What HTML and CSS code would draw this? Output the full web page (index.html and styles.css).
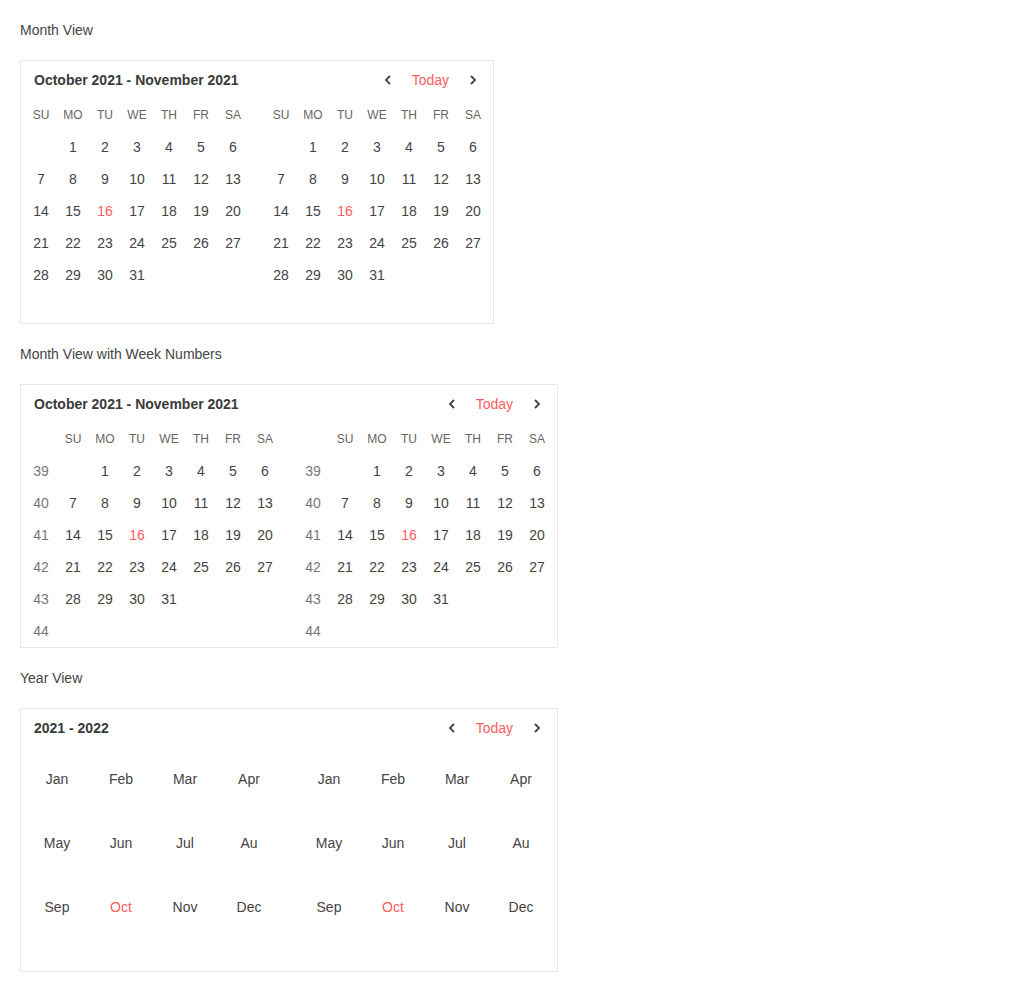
FILE: index.html
```html
<!DOCTYPE html>
<html lang="en">
<head>
    <meta charset="UTF-8">
    <meta name="viewport" content="width=device-width, initial-scale=1.0">
    <title>Calendar</title>
    <link rel="stylesheet" href="styles.css">
</head>
<body>
    <div class="label">Month View</div>
    <div class="calendar">
        <div class="cal-header">
            <span class="cal-title">October 2021 - November 2021</span>
            <div class="cal-nav">
                <svg class="chevron" viewBox="0 0 16 16"><polyline points="10,4 6,8 10,12"/></svg>
                <span class="today">Today</span>
                <svg class="chevron" viewBox="0 0 16 16"><polyline points="6,4 10,8 6,12"/></svg>
            </div>
        </div>
        <div class="cal-body" id="month-view"></div>
    </div>

    <div class="label">Month View with Week Numbers</div>
    <div class="calendar">
        <div class="cal-header">
            <span class="cal-title">October 2021 - November 2021</span>
            <div class="cal-nav">
                <svg class="chevron" viewBox="0 0 16 16"><polyline points="10,4 6,8 10,12"/></svg>
                <span class="today">Today</span>
                <svg class="chevron" viewBox="0 0 16 16"><polyline points="6,4 10,8 6,12"/></svg>
            </div>
        </div>
        <div class="cal-body" id="week-view"></div>
    </div>

    <div class="label">Year View</div>
    <div class="calendar">
        <div class="cal-header">
            <span class="cal-title">2021 - 2022</span>
            <div class="cal-nav">
                <svg class="chevron" viewBox="0 0 16 16"><polyline points="10,4 6,8 10,12"/></svg>
                <span class="today">Today</span>
                <svg class="chevron" viewBox="0 0 16 16"><polyline points="6,4 10,8 6,12"/></svg>
            </div>
        </div>
        <div class="cal-body" id="year-view"></div>
    </div>

    <script>
        const weekdays = ['SU', 'MO', 'TU', 'WE', 'TH', 'FR', 'SA'];
        const months = ['Jan', 'Feb', 'Mar', 'Apr', 'May', 'Jun', 'Jul', 'Au', 'Sep', 'Oct', 'Nov', 'Dec'];

        function cell(cls, text) {
            return `<div class="${cls}">${text}</div>`;
        }

        function buildMonth(withWeeks) {
            let html = `<div class="month${withWeeks ? ' with-weeks' : ''}">`;
            if (withWeeks) html += cell('weekday', '');
            weekdays.forEach(d => html += cell('weekday', d));

            let day = 1;
            for (let row = 0; row < 6; row++) {
                if (withWeeks) html += cell('week-num', 39 + row);
                for (let col = 0; col < 7; col++) {
                    const index = row * 7 + col;
                    if (index < 1 || day > 31) {
                        html += cell('day', '');
                    } else {
                        html += cell(day === 16 ? 'day current' : 'day', day);
                        day++;
                    }
                }
            }
            return html + '</div>';
        }

        function buildYear() {
            let html = '<div class="year">';
            months.forEach(m => html += cell(m === 'Oct' ? 'mon current' : 'mon', m));
            return html + '</div>';
        }

        document.getElementById('month-view').innerHTML = buildMonth(false) + buildMonth(false);
        document.getElementById('week-view').innerHTML = buildMonth(true) + buildMonth(true);
        document.getElementById('year-view').innerHTML = buildYear() + buildYear();
    </script>
</body>
</html>
```

FILE: styles.css
```css
body {
    margin: 0;
    padding: 20px;
    font-family: "Liberation Sans", Arial, sans-serif;
    font-size: 14px;
    color: #444;
    background-color: #fff;
}

.label {
    line-height: 20px;
}

.calendar {
    width: fit-content;
    margin: 20px 0;
    border: 1px solid #e8e8e8;
}

.cal-header {
    display: flex;
    align-items: center;
    justify-content: space-between;
    height: 38px;
    padding: 0 12px 0 13px;
}

.cal-title {
    font-weight: bold;
    color: #3a3a3a;
}

.cal-nav {
    display: flex;
    align-items: center;
    gap: 16px;
}

.chevron {
    width: 16px;
    height: 16px;
    fill: none;
    stroke: #444;
    stroke-width: 1.8;
}

.today {
    color: #ff5c5c;
}

.cal-body {
    display: flex;
    gap: 16px;
    padding: 0 4px;
}

.month {
    display: grid;
    grid-template-columns: repeat(7, 32px);
    grid-auto-rows: 32px;
}

.month.with-weeks {
    grid-template-columns: repeat(8, 32px);
}

.weekday,
.day,
.week-num {
    display: flex;
    align-items: center;
    justify-content: center;
}

.weekday {
    font-size: 12px;
    color: #666;
}

.week-num {
    color: #777;
}

.day.current,
.mon.current {
    color: #ff5c5c;
}

.year {
    display: grid;
    grid-template-columns: repeat(4, 64px);
    grid-auto-rows: 64px;
    padding-bottom: 32px;
}

.mon {
    display: flex;
    align-items: center;
    justify-content: center;
}
```
